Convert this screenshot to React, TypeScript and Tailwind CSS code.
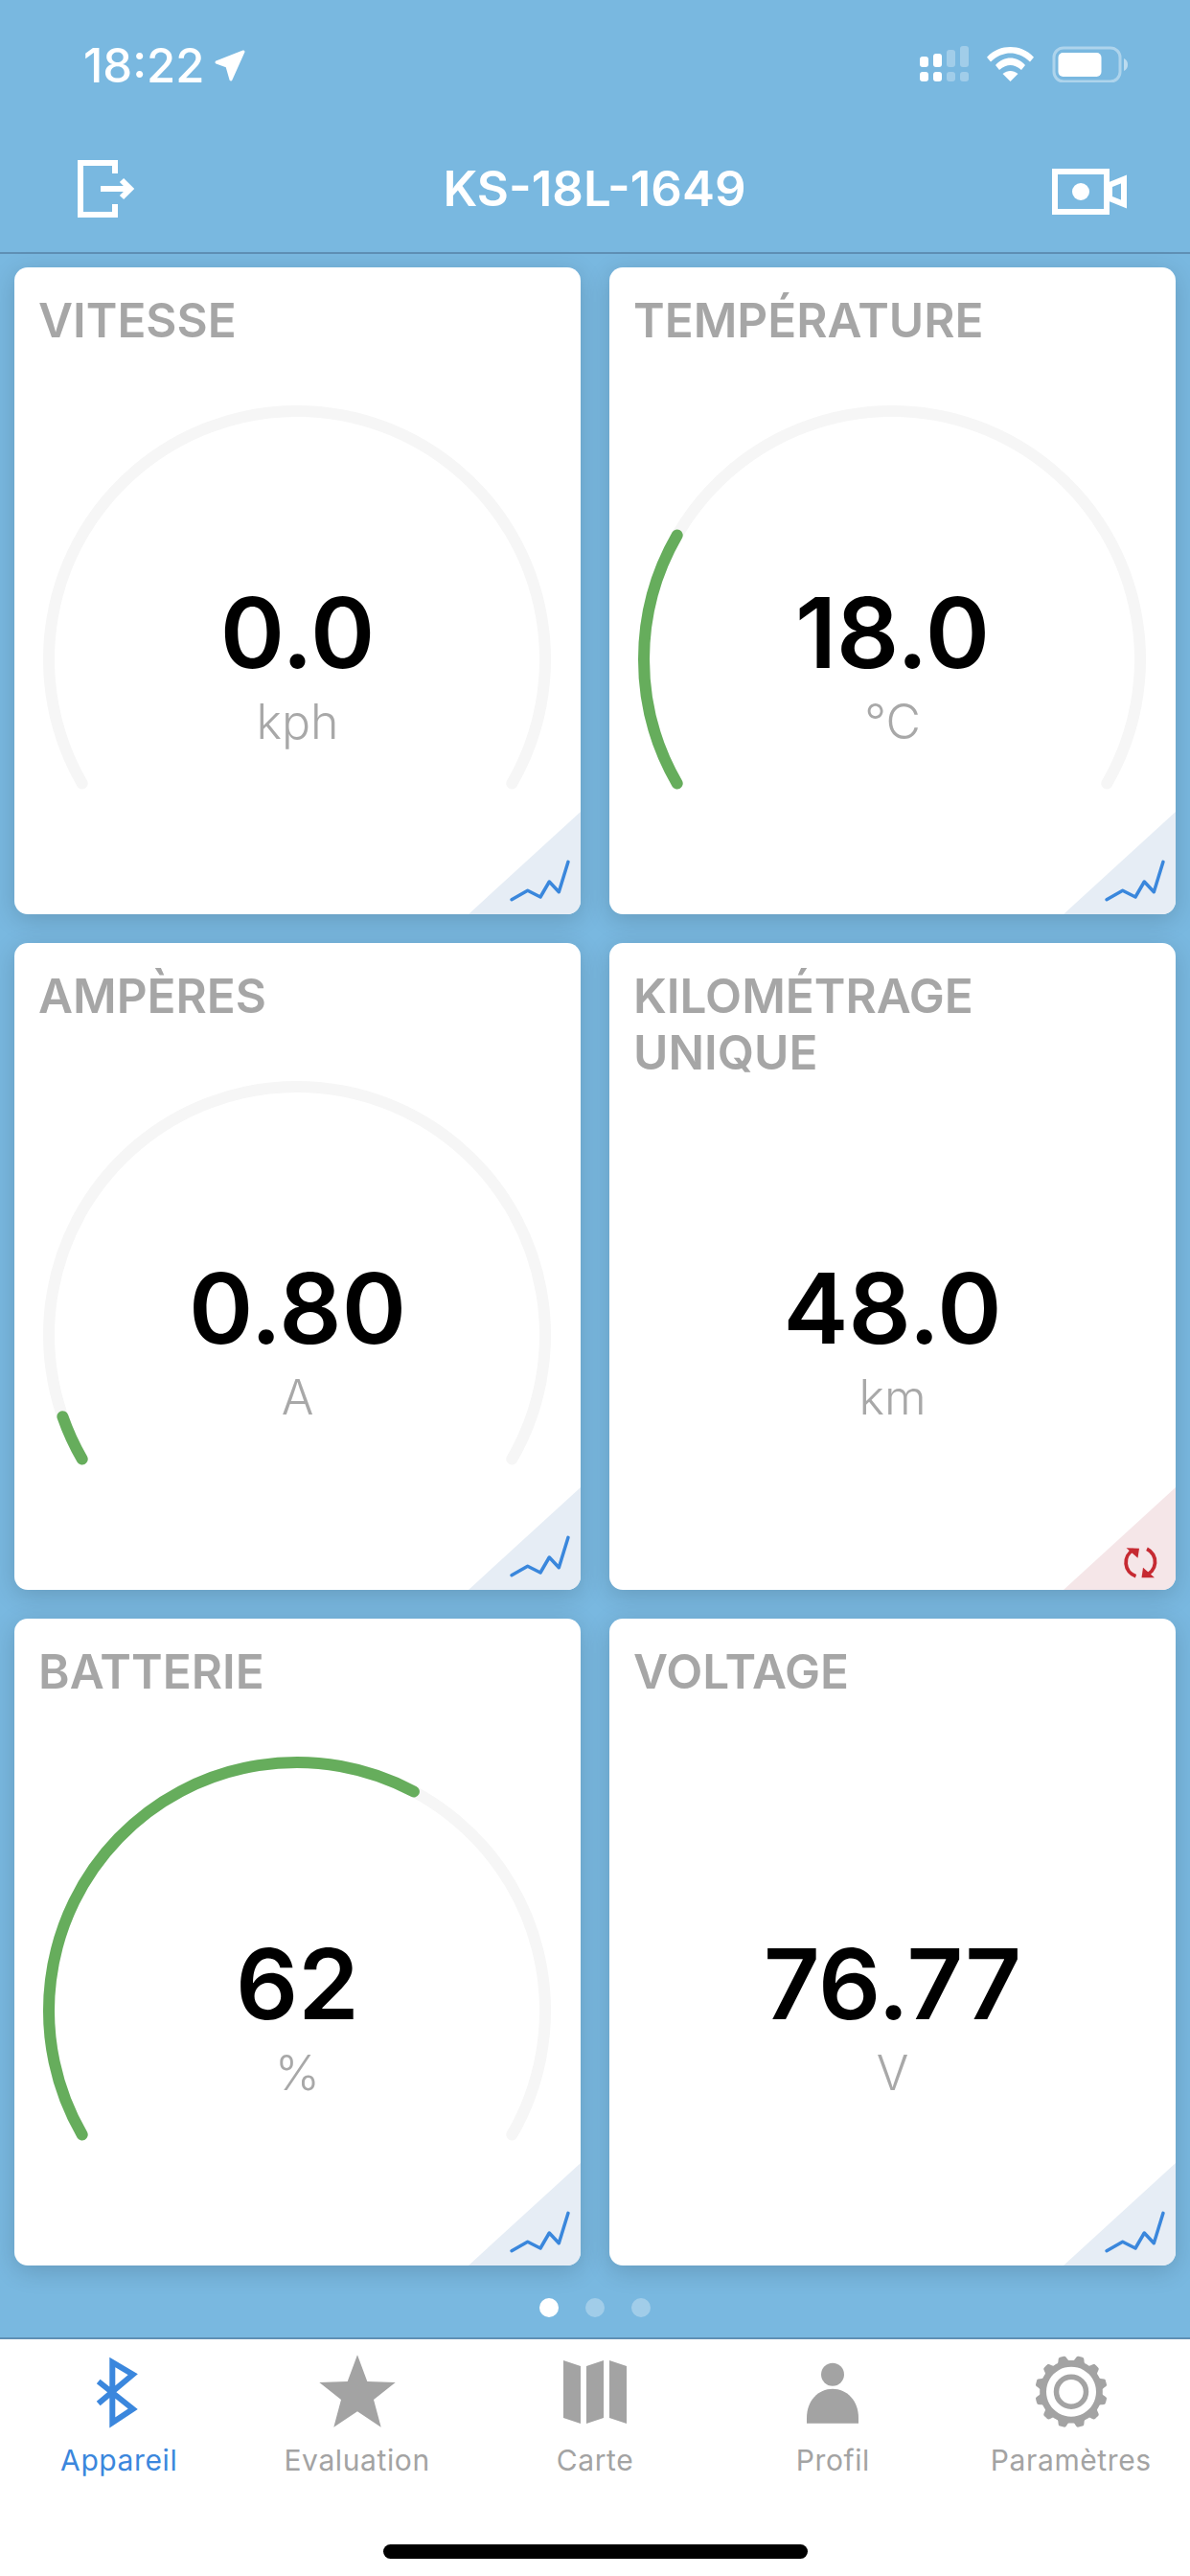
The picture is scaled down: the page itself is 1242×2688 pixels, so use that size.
import React from "react";

const polar = (a: number, r: number, cx: number, cy: number) => {
  const t = (a * Math.PI) / 180;
  return [cx + r * Math.cos(t), cy - r * Math.sin(t)];
};

const arc = (from: number, to: number) => {
  const [x1, y1] = polar(from, 259, 295, 409);
  const [x2, y2] = polar(to, 259, 295, 409);
  const large = from - to > 180 ? 1 : 0;
  return `M${x1.toFixed(2)} ${y1.toFixed(2)}A259 259 0 ${large} 1 ${x2.toFixed(2)} ${y2.toFixed(2)}`;
};

function Gauge({ fraction }: { fraction: number }) {
  return (
    <svg className="absolute left-0 top-0" width="591" height="560" viewBox="0 0 591 560" fill="none">
      <path d={arc(210, -30)} stroke="#f6f6f6" strokeWidth="12" strokeLinecap="round" />
      {fraction > 0 && (
        <path d={arc(210, 210 - 240 * fraction)} stroke="#66ad5c" strokeWidth="12" strokeLinecap="round" />
      )}
    </svg>
  );
}

function Corner({ kind }: { kind: "chart" | "sync" }) {
  return (
    <svg
      className="absolute right-0 bottom-0 rounded-br-[14px]"
      width="117"
      height="107"
      viewBox="0 0 117 107"
      fill="none"
    >
      <polygon points="117,0 117,107 0,107" fill={kind === "chart" ? "#e6edf5" : "#f5e6e8"} />
      {kind === "chart" ? (
        <polyline
          points="45,91.7 61.7,82.3 75,89 84.3,73 94.3,83.7 104,52.3"
          stroke="#3a87dc"
          strokeWidth="3.5"
          strokeLinecap="round"
          strokeLinejoin="round"
        />
      ) : (
        <g transform="translate(60 58.7)">
          <path d="M13 6.5A15 15 0 0 0 15.5 34" stroke="#c62a32" strokeWidth="3.8" />
          <polygon points="5.5,4.5 19,5 17.5,15" fill="#c62a32" />
          <path d="M27 5.5A15 15 0 0 1 24.5 33.5" stroke="#c62a32" strokeWidth="3.8" />
          <polygon points="35,35.5 21.5,35.5 23,25" fill="#c62a32" />
        </g>
      )}
    </svg>
  );
}

type CardProps = {
  title: string[];
  value: string;
  unit: string;
  fraction?: number;
  kind?: "chart" | "sync";
};

function Card({ title, value, unit, fraction, kind = "chart" }: CardProps) {
  return (
    <div className="relative h-[675px] rounded-[14px] bg-white shadow-[0_6px_26px_rgba(0,0,0,0.16)]">
      {fraction !== undefined && <Gauge fraction={fraction} />}
      <div className="relative h-[322px] pl-[25px] pt-[26px] text-[49.5px] leading-[59px] font-semibold text-[#a6a6a6]">
        {title.map((t) => (
          <div key={t}>{t}</div>
        ))}
      </div>
      <div className="relative flex flex-col items-center">
        <div className="text-[102px] leading-[118px] font-semibold text-black">{value}</div>
        <div className="mt-[4px] text-[50px] leading-[60px] font-light text-[#a8a8a8]">{unit}</div>
      </div>
      <Corner kind={kind} />
    </div>
  );
}

function Gear() {
  const pts: string[] = [];
  for (let i = 0; i < 240; i++) {
    const a = (i / 240) * Math.PI * 2;
    const c = Math.cos(12 * (a - Math.PI / 2) + Math.PI);
    const k = Math.max(0, Math.min(1, 0.5 + c * 1.1));
    const r = 32.8 + 4.9 * k;
    pts.push(`${(45 + r * Math.cos(a)).toFixed(2)} ${(40.7 + r * Math.sin(a)).toFixed(2)}`);
  }
  return (
    <svg width="90" height="90" viewBox="0 0 90 90">
      <path
        d={`M${pts.join("L")}ZM45 14.7a26 26 0 1 0 0.01 0Z`}
        fill="#a3a3a3"
        fillRule="evenodd"
      />
      <circle cx="45" cy="40.7" r="15.5" fill="none" stroke="#a3a3a3" strokeWidth="5.5" />
    </svg>
  );
}

const tabs: { label: string; active?: boolean; icon: React.ReactNode }[] = [
  {
    label: "Appareil",
    active: true,
    icon: (
      <svg width="90" height="90" viewBox="0 0 90 90" fill="none">
        <polyline
          points="23.7,30 59.7,58.7 38.3,73 38.3,10 59.7,22.7 23.7,53"
          stroke="#3b87dd"
          strokeWidth="6"
        />
      </svg>
    ),
  },
  {
    label: "Evaluation",
    icon: (
      <svg width="90" height="90" viewBox="0 0 90 90">
        <polygon
          points="45,2.3 55.3,30 84.7,31 62,49 69.7,77.7 45,61.3 20.3,77.7 28,49 5.3,31 34.7,30"
          fill="#a3a3a3"
        />
      </svg>
    ),
  },
  {
    label: "Carte",
    icon: (
      <svg width="90" height="90" viewBox="0 0 90 90" fill="#a3a3a3">
        <polygon points="12,8 30,14 30,74 12,68" />
        <polygon points="36,14 54,8 54,68 36,74" />
        <polygon points="60,8 78,14 78,74 60,68" />
      </svg>
    ),
  },
  {
    label: "Profil",
    icon: (
      <svg width="90" height="90" viewBox="0 0 90 90" fill="#a3a3a3">
        <circle cx="45" cy="22.7" r="12" />
        <path d="M18 73.7V68C18 50 30 37.7 45 37.7S72 50 72 68V73.7Z" />
      </svg>
    ),
  },
  { label: "Paramètres", icon: <Gear /> },
];

export default function App() {
  return (
    <div className="w-[1242px] h-[2688px] flex flex-col bg-[#79b8e0] font-['Inter',sans-serif]">
      <div className="h-[140px] flex justify-between pl-[87px] pr-[64px] pt-[40px] text-white">
        <div className="flex items-start gap-[10px]">
          <span className="text-[49px] leading-[58px] font-medium">18:22</span>
          <svg className="mt-[10px]" width="34" height="36" viewBox="0 0 34 36">
            <polygon
              points="3,15 31,4 18,33 14,19"
              fill="white"
              stroke="white"
              strokeWidth="3"
              strokeLinejoin="round"
            />
          </svg>
        </div>
        <div className="flex items-start gap-[18px] pt-[8px]">
          <svg width="52" height="38" viewBox="0 0 52 38" fill="white">
            <rect x="0" y="11" width="9" height="11" rx="3" />
            <rect x="14" y="8" width="9" height="14" rx="3" />
            <rect x="28" y="4" width="9" height="18" rx="3" opacity="0.3" />
            <rect x="42" y="0" width="9" height="22" rx="3" opacity="0.3" />
            <rect x="0" y="27" width="9" height="10" rx="3" />
            <rect x="14" y="27" width="9" height="10" rx="3" />
            <rect x="28" y="27" width="9" height="10" rx="3" opacity="0.3" />
            <rect x="42" y="27" width="9" height="10" rx="3" opacity="0.3" />
          </svg>
          <svg width="50" height="38" viewBox="0 0 50 38" fill="white">
            <path d="M0 11.7C7 4 16 1 24.5 1C33 1 42 4 49 11.7L45 16.5C38 10 31 7.5 24.5 7.5C18 7.5 11 10 4 16.5Z" />
            <path d="M9 20C14 14.5 19 12.5 24.5 12.5C30 12.5 35 14.5 40 20L36 25C32 21.5 28 20 24.5 20C21 20 17 21.5 13 25Z" />
            <path d="M16.5 29C19 27 22 26 24.5 26C27 26 30 27 32.5 29L24.5 37Z" />
          </svg>
          <svg width="80" height="38" viewBox="0 0 80 38" fill="white">
            <rect x="2" y="2" width="69" height="35" rx="10" fill="none" stroke="white" strokeWidth="3" opacity="0.4" />
            <rect x="6.5" y="7" width="45" height="25" rx="5" />
            <path d="M75 13C77.5 14 79 16.5 79 19.5C79 22.5 77.5 25 75 26Z" opacity="0.5" />
          </svg>
        </div>
      </div>

      <div className="h-[125px] flex items-center justify-between pl-[81px] pr-[66px] pb-[10px] border-b-2 border-[#5f90b5] text-white">
        <svg width="62" height="60" viewBox="0 0 62 60" fill="none">
          <path d="M39 14V3H3V57H39V46" stroke="white" strokeWidth="6" />
          <path d="M24 30H53" stroke="white" strokeWidth="6" />
          <polyline points="46,21 55,30 46,39" stroke="white" strokeWidth="6" />
        </svg>
        <div className="text-[51px] leading-[60px] font-semibold">KS-18L-1649</div>
        <svg className="mt-[6px]" width="78" height="48" viewBox="0 0 78 48" fill="none">
          <rect x="3" y="3" width="54" height="42" stroke="white" strokeWidth="6" />
          <circle cx="30" cy="24" r="9" fill="white" />
          <polygon points="60,17 75,11 75,37 60,31" stroke="white" strokeWidth="6" />
        </svg>
      </div>

      <div className="px-[15px] pt-[14px]">
        <div className="grid grid-cols-2 gap-x-[30px] gap-y-[30px]">
          <Card title={["VITESSE"]} value="0.0" unit="kph" fraction={0} />
          <Card title={["TEMPÉRATURE"]} value="18.0" unit="°C" fraction={0.25} />
          <Card title={["AMPÈRES"]} value="0.80" unit="A" fraction={0.045} />
          <Card title={["KILOMÉTRAGE", "UNIQUE"]} value="48.0" unit="km" kind="sync" />
          <Card title={["BATTERIE"]} value="62" unit="%" fraction={0.617} />
          <Card title={["VOLTAGE"]} value="76.77" unit="V" />
        </div>
        <div className="mt-[34px] flex justify-center gap-[28px]">
          <div className="w-5 h-5 rounded-full bg-white" />
          <div className="w-5 h-5 rounded-full bg-white/30" />
          <div className="w-5 h-5 rounded-full bg-white/30" />
        </div>
      </div>

      <div className="mt-[21px] flex-1 bg-white border-t-2 border-[#5f90b5] flex flex-col pt-[14px]">
        <div className="grid grid-cols-5">
          {tabs.map((t) => (
            <div
              key={t.label}
              className={`flex flex-col items-center text-[30px] leading-[36px] tracking-[0.6px] ${
                t.active ? "text-[#3b87dd]" : "text-[#a3a3a3]"
              }`}
            >
              {t.icon}
              <span className="mt-[4px]">{t.label}</span>
            </div>
          ))}
        </div>
        <div className="mt-[70px] mx-auto w-[443px] h-[15px] rounded-full bg-black" />
      </div>
    </div>
  );
}
